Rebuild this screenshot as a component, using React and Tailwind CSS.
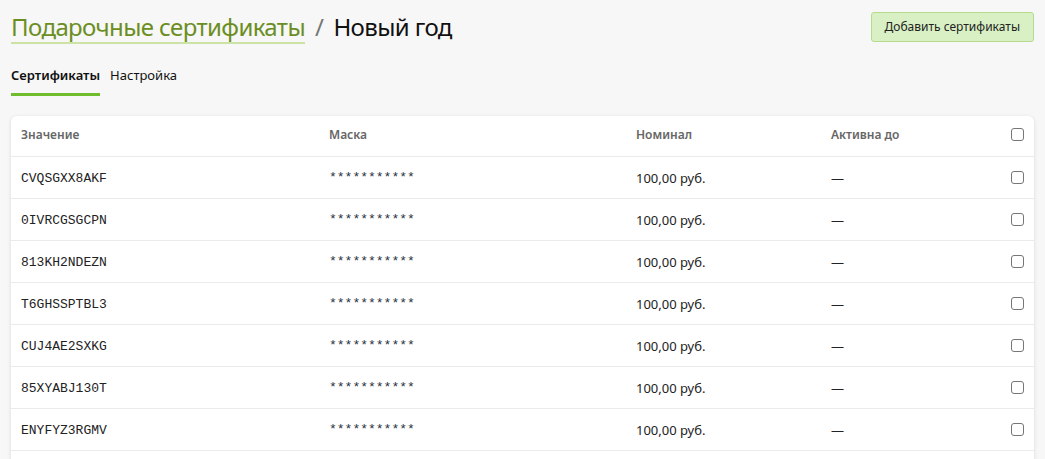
import React from "react";

const certs = [
  "CVQSGXX8AKF",
  "0IVRCGSGCPN",
  "813KH2NDEZN",
  "T6GHSSPTBL3",
  "CUJ4AE2SXKG",
  "85XYABJ130T",
  "ENYFYZ3RGMV",
];

const Box = () => (
  <span className="block w-[13px] h-[13px] rounded-[3px] border border-[#767676] bg-white" />
);

const row = "grid grid-cols-[308px_307px_195px_1fr_24px] items-center px-[10px]";

export default function App() {
  return (
    <div className="h-[459px] overflow-hidden bg-[#f7f7f7] font-['Noto_Sans',_'Open_Sans',_sans-serif] text-[#222]">
      <div className="px-[11px]">
        {/* Header */}
        <div className="flex items-start justify-between pt-[12px]">
          <h1 className="flex items-baseline text-[24px] tracking-[-0.6px] leading-[32px] font-normal mt-[-1px]">
            <a className="text-[#6b8e23] border-b-2 border-[#cde3a5] leading-[30px]">Подарочные сертификаты</a>
            <span className="text-[#777] mx-[10px]">/</span>
            <span className="text-[#111]">Новый год</span>
          </h1>
          <button className="h-[30px] px-[13px] bg-[#d9f0c4] border border-[#b5db8f] rounded-[3px] text-[12px] text-[#222]">
            Добавить сертификаты
          </button>
        </div>

        {/* Tabs */}
        <div className="flex gap-[10px] mt-[22px] text-[13px]">
          <div className="font-semibold text-[#111] pb-[7px] border-b-[3px] border-[#6fbd2c]">Сертификаты</div>
          <div className="text-[#111]">Настройка</div>
        </div>

        {/* Table card */}
        <div className="mt-[20px] bg-white rounded-[6px] shadow-[0_1px_4px_rgba(0,0,0,0.12)]">
          <div className={`${row} h-[41px] pb-[2px] border-b border-[#ebebeb] text-[12px] font-semibold text-[#666]`}>
            <span>Значение</span>
            <span>Маска</span>
            <span>Номинал</span>
            <span>Активна до</span>
            <span className="flex justify-end"><Box /></span>
          </div>
          {certs.map((c) => (
            <div key={c} className={`${row} h-[42px] pt-[3px] border-b border-[#ebebeb] text-[13px]`}>
              <span className="font-['Liberation_Mono',_monospace] text-[13px] text-[#222]">{c}</span>
              <span className="font-['Liberation_Mono',_monospace] text-[13px] text-[#2a3340] -mt-[2px]">***********</span>
              <span>100,00 руб.</span>
              <span>—</span>
              <span className="flex justify-end -mt-[3px]"><Box /></span>
            </div>
          ))}
          <div className="h-[42px]" />
        </div>
      </div>
    </div>
  );
}
